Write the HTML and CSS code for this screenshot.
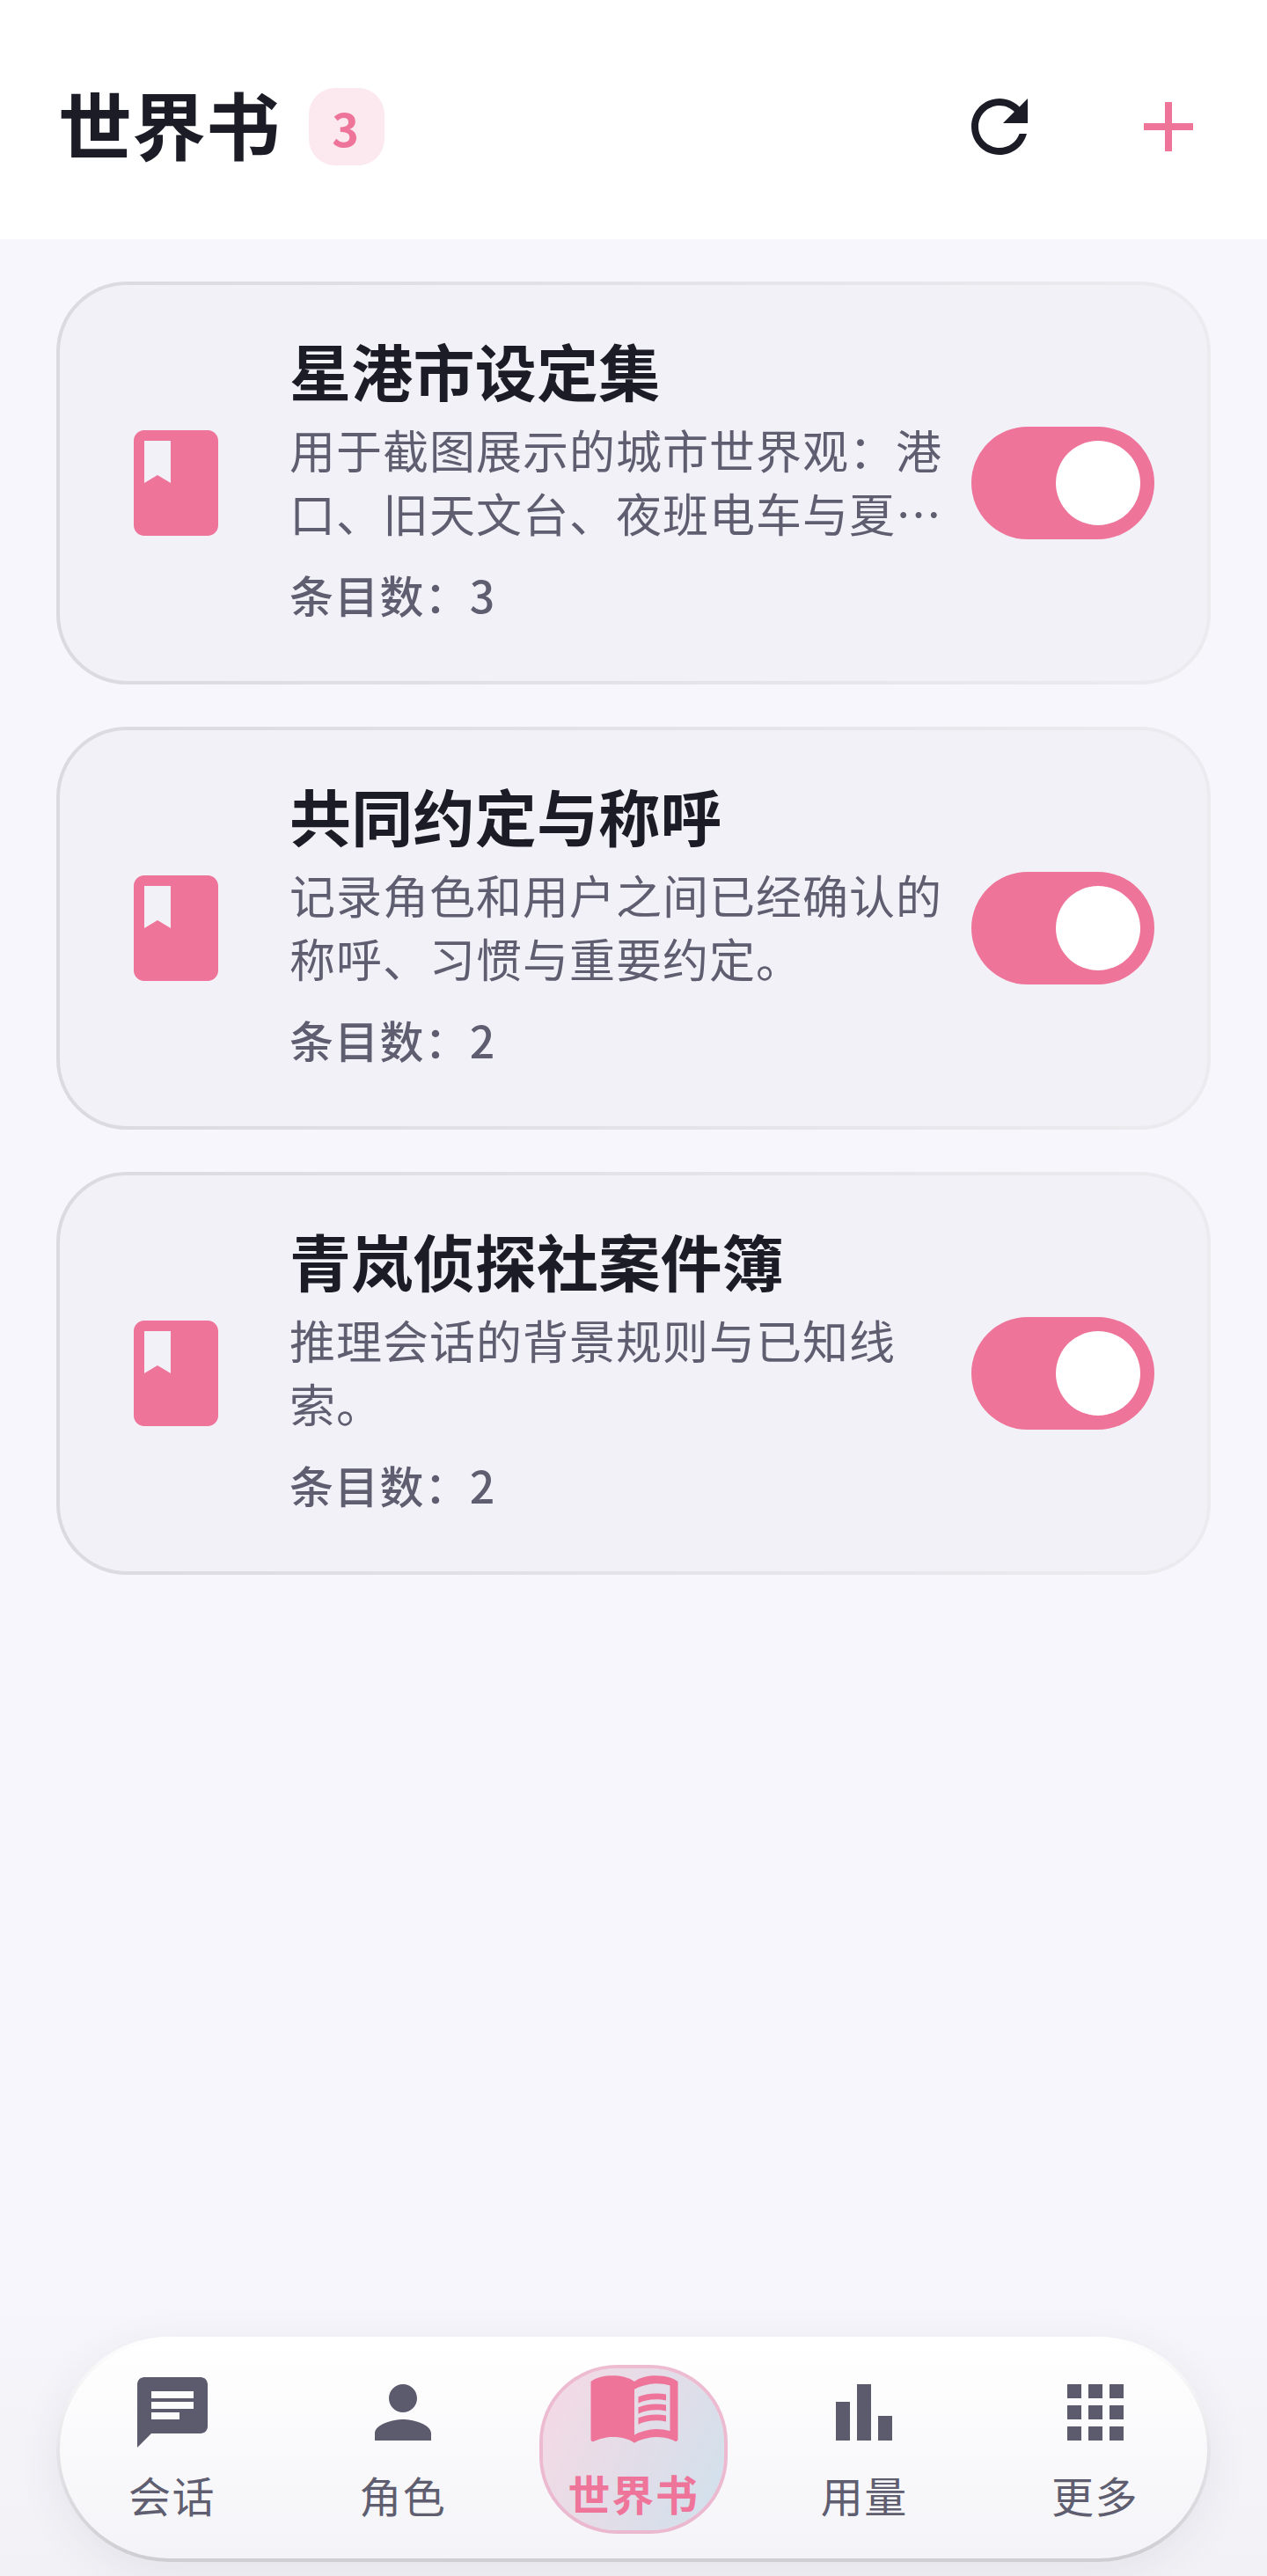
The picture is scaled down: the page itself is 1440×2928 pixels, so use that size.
FILE: index.html
```html
<!DOCTYPE html>
<html lang="zh-CN">
<head>
    <meta charset="UTF-8">
    <meta name="viewport" content="width=device-width, initial-scale=1.0">
    <title>世界书</title>
    <link rel="stylesheet" href="styles.css">
</head>
<body>
    <header class="top-bar">
        <h1 class="page-title">世界书</h1>
        <span class="count-badge">3</span>
        <button class="icon-btn refresh-btn" aria-label="刷新">
            <svg viewBox="0 0 24 24"><path d="M17.65 6.35C16.2 4.9 14.21 4 12 4c-4.42 0-7.99 3.58-7.99 8s3.57 8 7.99 8c3.73 0 6.84-2.55 7.73-6h-2.08c-.82 2.33-3.04 4-5.65 4-3.31 0-6-2.69-6-6s2.69-6 6-6c1.66 0 3.14.69 4.22 1.78L13 11h7V4l-2.35 2.35z"/></svg>
        </button>
        <button class="icon-btn add-btn" aria-label="新建">
            <svg viewBox="0 0 24 24"><path d="M19 13h-6v6h-2v-6H5v-2h6V5h2v6h6v2z"/></svg>
        </button>
    </header>

    <main class="book-list">
        <article class="book-card">
            <svg class="book-icon" viewBox="0 0 24 24"><path d="M18 2H6c-1.1 0-2 .9-2 2v16c0 1.1.9 2 2 2h12c1.1 0 2-.9 2-2V4c0-1.1-.9-2-2-2zM6 4h5v8l-2.5-1.5L6 12V4z"/></svg>
            <div class="book-text">
                <h2 class="book-name">星港市设定集</h2>
                <p class="book-desc">用于截图展示的城市世界观：港口、旧天文台、夜班电车与夏…</p>
                <p class="book-meta">条目数：3</p>
            </div>
            <span class="switch"><span class="switch-thumb"></span></span>
        </article>

        <article class="book-card">
            <svg class="book-icon" viewBox="0 0 24 24"><path d="M18 2H6c-1.1 0-2 .9-2 2v16c0 1.1.9 2 2 2h12c1.1 0 2-.9 2-2V4c0-1.1-.9-2-2-2zM6 4h5v8l-2.5-1.5L6 12V4z"/></svg>
            <div class="book-text">
                <h2 class="book-name">共同约定与称呼</h2>
                <p class="book-desc">记录角色和用户之间已经确认的称呼、习惯与重要约定。</p>
                <p class="book-meta">条目数：2</p>
            </div>
            <span class="switch"><span class="switch-thumb"></span></span>
        </article>

        <article class="book-card">
            <svg class="book-icon" viewBox="0 0 24 24"><path d="M18 2H6c-1.1 0-2 .9-2 2v16c0 1.1.9 2 2 2h12c1.1 0 2-.9 2-2V4c0-1.1-.9-2-2-2zM6 4h5v8l-2.5-1.5L6 12V4z"/></svg>
            <div class="book-text">
                <h2 class="book-name">青岚侦探社案件簿</h2>
                <p class="book-desc">推理会话的背景规则与已知线索。</p>
                <p class="book-meta">条目数：2</p>
            </div>
            <span class="switch"><span class="switch-thumb"></span></span>
        </article>
    </main>

    <div class="nav-wrap">
        <nav class="bottom-nav">
            <a class="nav-item">
                <svg class="nav-icon" viewBox="0 0 24 24"><path d="M20 2H4c-1.1 0-1.99.9-1.99 2L2 22l4-4h14c1.1 0 2-.9 2-2V4c0-1.1-.9-2-2-2zM6 9h12v2H6V9zm8 5H6v-2h8v2zm4-6H6V6h12v2z"/></svg>
                <span class="nav-label">会话</span>
            </a>
            <a class="nav-item">
                <svg class="nav-icon" viewBox="0 0 24 24"><path d="M12 12c2.21 0 4-1.79 4-4s-1.79-4-4-4-4 1.79-4 4 1.79 4 4 4zm0 2c-2.67 0-8 1.34-8 4v2h16v-2c0-2.66-5.33-4-8-4z"/></svg>
                <span class="nav-label">角色</span>
            </a>
            <a class="nav-item active">
                <svg class="nav-icon" viewBox="0 0 24 24"><path d="M21 5c-1.11-.35-2.33-.5-3.5-.5-1.95 0-4.05.4-5.5 1.5-1.45-1.1-3.55-1.5-5.5-1.5S2.45 4.9 1 6v14.65c0 .25.25.5.5.5.1 0 .15-.05.25-.05C3.1 20.45 5.05 20 6.5 20c1.95 0 4.05.4 5.5 1.5 1.35-.85 3.8-1.5 5.5-1.5 1.65 0 3.35.3 4.75 1.05.1.05.15.05.25.05.25 0 .5-.25.5-.5V6c-.6-.45-1.25-.75-2-1zm0 13.5c-1.1-.35-2.3-.5-3.5-.5-1.7 0-4.15.65-5.5 1.5V8c1.35-.85 3.8-1.5 5.5-1.5 1.2 0 2.4.15 3.5.5v11.5z"/><path d="M17.5 10.5c.88 0 1.73.09 2.5.26V9.24c-.79-.15-1.64-.24-2.5-.24-1.7 0-3.24.29-4.5.83v1.66c1.13-.64 2.7-.99 4.5-.99zM13 12.49v1.66c1.13-.64 2.7-.99 4.5-.99.88 0 1.73.09 2.5.26V11.9c-.79-.15-1.64-.24-2.5-.24-1.7 0-3.24.3-4.5.83zM17.5 14.33c-1.7 0-3.24.29-4.5.83v1.66c1.13-.64 2.7-.99 4.5-.99.88 0 1.73.09 2.5.26v-1.52c-.79-.16-1.64-.24-2.5-.24z"/></svg>
                <span class="nav-label">世界书</span>
            </a>
            <a class="nav-item">
                <svg class="nav-icon" viewBox="0 0 24 24"><path d="M4 9h4v11H4zM10 4h4v16h-4zM16 13h4v7h-4z"/></svg>
                <span class="nav-label">用量</span>
            </a>
            <a class="nav-item">
                <svg class="nav-icon" viewBox="0 0 24 24"><path d="M4 8h4V4H4v4zm6 12h4v-4h-4v4zm-6 0h4v-4H4v4zm0-6h4v-4H4v4zm6 0h4v-4h-4v4zm6-10v4h4V4h-4zm-6 4h4V4h-4v4zm6 6h4v-4h-4v4zm0 6h4v-4h-4v4z"/></svg>
                <span class="nav-label">更多</span>
            </a>
        </nav>
    </div>
</body>
</html>
```

FILE: styles.css
```css
/* Base */
* {
    margin: 0;
    padding: 0;
    box-sizing: border-box;
}

body {
    height: 2928px;
    display: flex;
    flex-direction: column;
    background-color: #f7f6fc;
    color: #1c1c26;
    font-family: "Noto Sans CJK SC", "Noto Sans", sans-serif;
}

/* Top bar */
.top-bar {
    height: 272px;
    flex-shrink: 0;
    display: flex;
    align-items: center;
    padding: 16px 64px 0;
    background-color: #fff;
}

.page-title {
    margin-left: 2px;
    margin-bottom: 8px;
    font-size: 84px;
    font-weight: 700;
    line-height: 1;
}

.count-badge {
    width: 86px;
    height: 88px;
    margin-left: 33px;
    padding-right: 3px;
    display: flex;
    align-items: center;
    justify-content: center;
    border-radius: 30px;
    background-color: #fbe9ef;
    color: #ee7499;
    font-size: 52px;
    font-weight: 700;
}

.icon-btn {
    width: 96px;
    height: 96px;
    background: none;
    border: 0;
}

.icon-btn svg {
    display: block;
    width: 96px;
    height: 96px;
}

.refresh-btn {
    margin-left: auto;
    fill: #1c1c26;
}

.add-btn {
    margin-left: 96px;
    fill: #ee7499;
}

/* Book cards */
.book-list {
    flex: 1;
    display: flex;
    flex-direction: column;
    gap: 48px;
    padding: 48px 64px 0;
}

.book-card {
    height: 458px;
    display: flex;
    align-items: center;
    padding: 0 60px;
    border: 4px solid transparent;
    border-radius: 80px;
    background:
        linear-gradient(#f2f1f8, #f2f1f8) padding-box,
        linear-gradient(to right, #dadae0, #ebebf0) border-box;
}

.book-icon {
    width: 144px;
    height: 144px;
    flex-shrink: 0;
    fill: #ee7499;
}

.book-text {
    width: 743px;
    margin-left: 57px;
    padding-bottom: 12px;
    flex-shrink: 0;
}

.book-name {
    font-size: 70px;
    font-weight: 700;
    line-height: 84px;
    letter-spacing: 0.25px;
}

.book-desc {
    margin-top: 12px;
    color: #5f5e70;
    font-size: 52px;
    line-height: 72px;
    letter-spacing: 1px;
}

.book-meta {
    margin-top: 24px;
    color: #5f5e70;
    font-size: 50px;
    font-weight: 500;
    line-height: 64px;
    letter-spacing: 1.2px;
}

.switch {
    width: 208px;
    height: 128px;
    margin-left: 32px;
    flex-shrink: 0;
    display: flex;
    align-items: center;
    justify-content: flex-end;
    padding-right: 16px;
    border-radius: 64px;
    background-color: #ee7499;
}

.switch-thumb {
    width: 96px;
    height: 96px;
    border-radius: 50%;
    background-color: #fff;
}

/* Bottom navigation */
.nav-wrap {
    height: 368px;
    flex-shrink: 0;
    padding: 0 64px 16px;
    display: flex;
    align-items: flex-end;
    background: linear-gradient(to bottom, #f7f6fc, #f1f1f6);
}

.bottom-nav {
    width: 100%;
    height: 256px;
    display: grid;
    grid-template-columns: repeat(5, 262.25px);
    justify-content: center;
    padding: 28px 0;
    border: 4px solid transparent;
    border-radius: 128px;
    background:
        linear-gradient(to bottom, #fff, #f4f4f8) padding-box,
        linear-gradient(to bottom, #fff, #e6e6ea 50%, #cdcdd2) border-box;
    box-shadow: 0 12px 48px rgba(60, 60, 90, 0.08);
}

.nav-item {
    justify-self: center;
    width: 214px;
    display: flex;
    flex-direction: column;
    align-items: center;
    color: #5f5e70;
    fill: #5c5b6d;
}

.nav-icon {
    width: 96px;
    height: 96px;
    margin-top: 6px;
    flex-shrink: 0;
}

.nav-label {
    font-size: 48px;
    line-height: 64px;
    letter-spacing: 1.6px;
    margin-top: 13px;
}

.nav-item.active {
    border: 4px solid rgba(230, 160, 190, 0.7);
    border-radius: 88px;
    background: linear-gradient(115deg, #f6d9e4, #cfe1ec) padding-box;
    color: #ee7499;
    fill: #ee7499;
}

.nav-item.active .nav-icon {
    width: 108px;
    height: 108px;
    margin-top: -12px;
    margin-left: 2px;
}

.nav-item.active .nav-label {
    font-weight: 700;
    margin-top: 13px;
}
```
